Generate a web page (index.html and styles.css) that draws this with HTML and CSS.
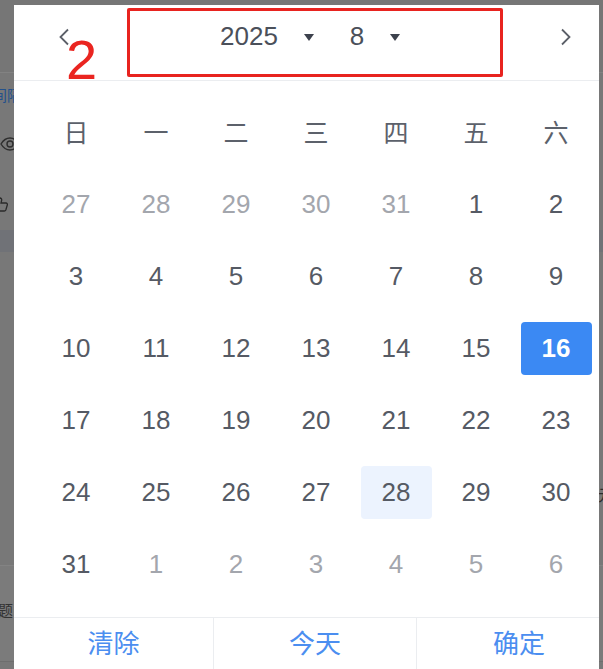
FILE: index.html
```html
<!DOCTYPE html>
<html lang="zh-CN">
<head>
    <meta charset="UTF-8">
    <meta name="viewport" content="width=device-width, initial-scale=1.0">
    <title>日期选择</title>
    <link rel="stylesheet" href="styles.css">
</head>
<body>
    <!-- page behind the overlay, only its left edge shows -->
    <div class="behind">
        <div class="band band-top"></div>
        <div class="band band-mid"></div>
        <div class="band band-low"></div>
        <span class="peek peek-link">间隔</span>
        <svg class="peek peek-eye" width="20" height="14" viewBox="0 0 20 14"><path d="M1 7C4 2 8 1 10 1s6 1 9 6c-3 5-7 6-9 6S4 12 1 7z" fill="none" stroke="#2e2e2e" stroke-width="1.4"/><circle cx="10" cy="7" r="3" fill="none" stroke="#2e2e2e" stroke-width="1.4"/></svg>
        <svg class="peek peek-thumb" width="16" height="16" viewBox="0 0 16 16"><path d="M1 7h3v8H1zM4 8l4-6c1 0 2 1 1.6 2.5L9 7h5c1 0 1.6 1 1.3 2l-1.5 5c-.3.7-.8 1-1.5 1H4" fill="none" stroke="#2a2a2a" stroke-width="1.3"/></svg>
        <span class="peek peek-title">题</span>
        <span class="peek peek-yuan">元</span>
    </div>

    <div class="picker">
        <div class="picker-head">
            <svg class="nav nav-prev" width="12" height="18" viewBox="0 0 12 18"><polyline points="10,1.5 2.5,9 10,16.5" fill="none" stroke="#5b5f68" stroke-width="1.8"/></svg>
            <div class="title">
                <span class="sel">2025</span>
                <span class="caret"></span>
                <span class="sel sel-month">8</span>
                <span class="caret"></span>
            </div>
            <svg class="nav nav-next" width="12" height="18" viewBox="0 0 12 18"><polyline points="2,1.5 9.5,9 2,16.5" fill="none" stroke="#5b5f68" stroke-width="1.8"/></svg>
        </div>

        <div class="mark-box"></div>
        <div class="mark-num">2</div>

        <div class="grid">
            <div class="wk">日</div><div class="wk">一</div><div class="wk">二</div><div class="wk">三</div><div class="wk">四</div><div class="wk">五</div><div class="wk">六</div>

            <div class="day other">27</div><div class="day other">28</div><div class="day other">29</div><div class="day other">30</div><div class="day other">31</div><div class="day">1</div><div class="day">2</div>
            <div class="day">3</div><div class="day">4</div><div class="day">5</div><div class="day">6</div><div class="day">7</div><div class="day">8</div><div class="day">9</div>
            <div class="day">10</div><div class="day">11</div><div class="day">12</div><div class="day">13</div><div class="day">14</div><div class="day">15</div><div class="day"><span class="selected">16</span></div>
            <div class="day">17</div><div class="day">18</div><div class="day">19</div><div class="day">20</div><div class="day">21</div><div class="day">22</div><div class="day">23</div>
            <div class="day">24</div><div class="day">25</div><div class="day">26</div><div class="day">27</div><div class="day"><span class="today">28</span></div><div class="day">29</div><div class="day">30</div>
            <div class="day">31</div><div class="day other">1</div><div class="day other">2</div><div class="day other">3</div><div class="day other">4</div><div class="day other">5</div><div class="day other">6</div>
        </div>

        <div class="foot">
            <button class="btn">清除</button>
            <button class="btn">今天</button>
            <button class="btn btn-ok">确定</button>
        </div>
    </div>
</body>
</html>
```

FILE: styles.css
```css
html, body { margin: 0; height: 100%; overflow: hidden; }
body { background: #787878; font-family: "Liberation Sans", "Noto Sans CJK SC", sans-serif; position: relative; }

.behind { position: absolute; inset: 0; }
.band { position: absolute; left: 0; right: 0; }
.band-top { top: 0; height: 72px; background: #767676; border-bottom: 1px solid #828282; }
.band-mid { top: 230px; height: 22px; background: #707277; }
.band-low { top: 565px; height: 95px; background: #7b7b7b; border-top: 1px solid #838383; border-bottom: 1px solid #6e6e6e; }
.peek { position: absolute; }
.peek-link { left: -8px; top: 84px; font-size: 15px; color: #23518c; }
.peek-eye { left: 0; top: 137px; }
.peek-thumb { left: -8px; top: 196px; }
.peek-title { left: -2px; top: 599px; font-size: 15px; color: #333; }
.peek-yuan { left: 598px; top: 482px; font-size: 16px; color: #2c2c2c; }

.picker { position: relative; margin: 5px 0 0 14px; width: 585px; height: 664px; background: #fff; display: flex; flex-direction: column; }

.picker-head { height: 63px; padding-bottom: 12px; border-bottom: 1px solid #ebedf0; display: flex; align-items: center; }
.nav-prev { margin-left: 44px; }
.nav-next { margin-left: auto; margin-right: 27px; }
.title { display: flex; align-items: center; margin-left: 150px; font-size: 26px; color: #4b505a; }
.sel-month { margin-left: 36px; }
.caret { width: 0; height: 0; border-left: 5px solid transparent; border-right: 5px solid transparent; border-top: 7px solid #3d424d; margin-left: 26px; margin-top: 2px; }

.mark-box { position: absolute; left: 113px; top: 3px; width: 370px; height: 63px; border: 3px solid #e8231f; border-radius: 2px; }
.mark-num { position: absolute; left: 52px; top: 27px; font-size: 56px; line-height: 1; color: #ea2520; }

.grid { display: grid; grid-template-columns: repeat(7, 80px); grid-template-rows: 74px repeat(6, 72px); padding: 13px 0 17px 22px; }
.wk, .day { display: flex; align-items: center; justify-content: center; font-size: 26px; color: #555a64; }
.wk { color: #5c616b; font-size: 25px; }
.day.other { color: #a3a6ad; }
.selected, .today { width: 71px; height: 53px; border-radius: 4px; display: flex; align-items: center; justify-content: center; }
.selected { background: #3b89f3; color: #fff; font-weight: bold; }
.today { background: #ecf3fe; }

.foot { display: grid; grid-template-columns: 200px 203px 1fr; border-top: 1px solid #ebedf0; flex: 1; }
.btn { background: none; border: none; border-right: 1px solid #ebedf0; font: inherit; font-size: 26px; color: #4b8ef0; padding: 0 0 4px; cursor: pointer; }
.btn-ok { border-right: none; padding-left: 22px; }
```
